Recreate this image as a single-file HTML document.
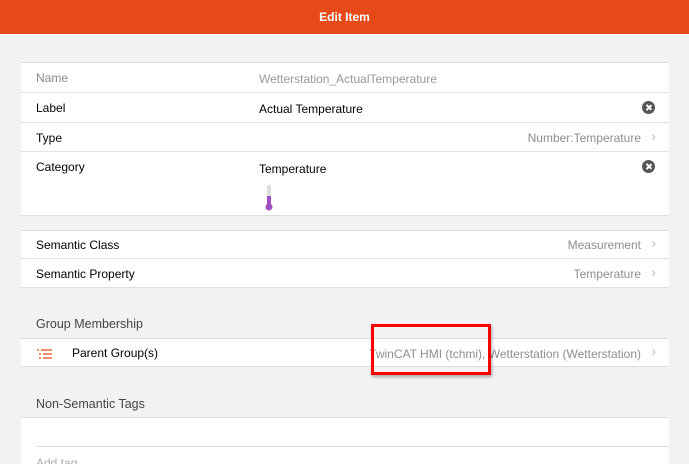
<!DOCTYPE html>
<html style="height:464px;overflow:hidden"><head><style>
body{margin:0;width:689px;height:464px;overflow:hidden;background:#f2f2f2;font-family:"Liberation Sans",sans-serif;font-size:12px;color:#000;position:relative}
.hdr{height:34px;background:#e64a19;color:#fff;font-weight:bold;text-align:center;line-height:34px;font-size:12px}
.card{position:absolute;left:21px;width:648px;background:#fff;border-top:1px solid #ddd;border-bottom:1px solid #ddd}
.row{position:relative;border-bottom:1px solid #e2e2e2;margin-left:0}
.row:last-child{border-bottom:none}
.l{position:absolute;left:15px}
.v{position:absolute;left:238px}
.r{position:absolute;right:28px;color:#8e8e93}
.ch{position:absolute;right:13px;color:#bbb;font-size:14px}
.x{position:absolute;right:14px;width:13px;height:13px;border-radius:50%;background:#555}
.x:before,.x:after{content:"";position:absolute;left:6px;top:3px;width:1.5px;height:7px;background:#fff;transform:rotate(45deg)}
.x:after{transform:rotate(-45deg)}
.sec{position:absolute;left:36px;color:#444;font-size:12.5px}
</style></head><body>
<div class="hdr">Edit Item</div>
<div class="card" style="top:62px">
 <div class="row" style="height:29px"><span class="l" style="top:8px;color:#888">Name</span><span class="v" style="top:9px;color:#999">Wetterstation_ActualTemperature</span></div>
 <div class="row" style="height:29px"><span class="l" style="top:8px">Label</span><span class="v" style="top:9px">Actual Temperature</span><span class="x" style="top:8px"></span></div>
 <div class="row" style="height:28px"><span class="l" style="top:8px">Type</span><span class="r" style="top:8px">Number:Temperature</span><span class="ch" style="top:5px">›</span></div>
 <div class="row" style="height:63px"><span class="l" style="top:8px">Category</span><span class="v" style="top:10px">Temperature</span><span class="x" style="top:8px"></span>
  <svg style="position:absolute;left:243px;top:32px" width="10" height="28"><rect x="3" y="1" width="4" height="20" rx="2" fill="#ddd"/><rect x="3" y="12" width="4" height="10" fill="#a04fc0"/><circle cx="5" cy="23" r="3.5" fill="#a04fc0"/></svg></div>
</div>
<div class="card" style="top:230px">
 <div class="row" style="height:27px"><span class="l" style="top:7px">Semantic Class</span><span class="r" style="top:7px">Measurement</span><span class="ch" style="top:4px">›</span></div>
 <div class="row" style="height:28px"><span class="l" style="top:8px">Semantic Property</span><span class="r" style="top:8px">Temperature</span><span class="ch" style="top:5px">›</span></div>
</div>
<div class="sec" style="top:317px">Group Membership</div>
<div class="card" style="top:338px;height:27px">
 <svg style="position:absolute;left:16px;top:10px" width="16" height="10"><g stroke="#e64a19" stroke-width="1.3"><line x1="0" y1="1" x2="2" y2="1"/><line x1="4" y1="1" x2="15" y2="1"/><line x1="2" y1="5" x2="4" y2="5"/><line x1="6" y1="5" x2="15" y2="5"/><line x1="2" y1="9" x2="4" y2="9"/><line x1="6" y1="9" x2="15" y2="9"/></g></svg>
 <span style="position:absolute;left:51px;top:7px">Parent Group(s)</span><span class="r" style="top:8px">TwinCAT HMI (tchmi), Wetterstation (Wetterstation)</span><span class="ch" style="top:4px">›</span>
</div>
<div style="position:absolute;left:371px;top:324px;width:114px;height:45px;border:3px solid #f00;box-shadow:1px 2px 3px rgba(0,0,0,.3)"></div>
<div class="sec" style="top:397px">Non-Semantic Tags</div>
<div class="card" style="top:417px;height:60px">
 <div style="position:absolute;left:15px;right:0;top:28px;border-top:1px solid #ddd"></div>
 <span style="position:absolute;left:15px;top:38px;color:#aaa">Add tag</span>
</div>
</body></html>
